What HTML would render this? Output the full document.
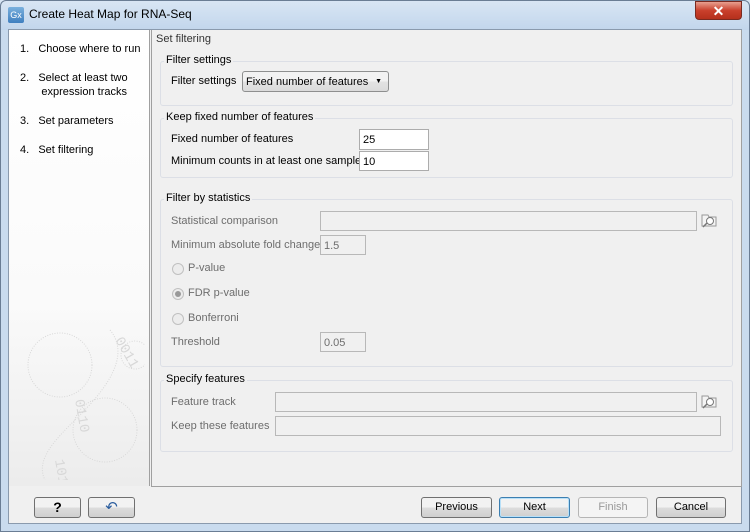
<!DOCTYPE html>
<html><head><style>
*{margin:0;padding:0;box-sizing:border-box}
body{width:750px;height:532px;overflow:hidden;font-family:"Liberation Sans",sans-serif;font-size:11px;color:#000;background:#c9dbee;position:relative}
.a{position:absolute}
.title{left:0;top:0;width:750px;height:30px;background:linear-gradient(#d9e6f4,#c2d6ec)}
.frame{left:0;top:0;width:750px;height:532px;border:1px solid #6a7d94;border-radius:6px 6px 0 0}
.client{left:8px;top:29px;width:734px;height:495px;background:#f0f0f0;border:1px solid #8a9aad}
.left{left:9px;top:30px;width:141px;height:456px;background:linear-gradient(#fff,#fafafa 60%,#ececec);border-right:1px solid #a0a0a0}
.content{left:151px;top:30px;width:591px;height:457px;border:1px solid #a0a0a0;border-top:none;background:#f0f0f0}
.grp{position:absolute;border:1px solid #dcdfe6;border-radius:3px}
.gl{position:absolute;background:#f0f0f0;padding:0 2px;font-size:11px}
.in{position:absolute;background:#fff;border:1px solid #acacac;padding:4px 3px;font-size:11px}
.dis{background:#f0f0f0;color:#6d6d6d;border-color:#b8b8b8}
.g{color:#6d6d6d}
.btn{position:absolute;top:497px;height:21px;border:1px solid #707070;border-radius:3px;background:linear-gradient(#f2f2f2 50%,#dddddd 50%,#cfcfcf);text-align:center;line-height:19px;font-size:11px}
.rad{position:absolute;width:12px;height:12px;border-radius:50%;border:1px solid #c0c0c0;background:#ececec}
</style></head><body>
<div class="a title"></div>
<div class="a" style="left:8px;top:7px;width:16px;height:16px;background:linear-gradient(#7ab0dd,#3f7fbf);border-radius:2px;color:#fff;font-size:9px;line-height:16px;text-align:center">Gx</div>
<div class="a" style="left:29px;top:7px;font-size:12px">Create Heat Map for RNA-Seq</div>
<div class="a" style="left:695px;top:1px;width:47px;height:19px;background:linear-gradient(#e8a090,#c9402c 50%,#b5301c);border:1px solid #7a2a20;border-radius:0 0 4px 4px;color:#fff;text-align:center;font-weight:bold;font-size:14px;line-height:18px">✕</div>
<div class="a frame"></div>
<div class="a client"></div>
<div class="a left"></div>
<svg class="a" style="left:15px;top:300px" width="130" height="180"><g fill="none" stroke="#d8d8d8" stroke-dasharray="1 1.5"><circle cx="45" cy="65" r="32"/><circle cx="90" cy="130" r="32"/><circle cx="120" cy="55" r="14"/><path d="M95 30 C120 60 80 100 60 120 C40 140 20 160 30 180"/></g><g fill="#d8d8d8" font-size="14" font-family="Liberation Mono"><text x="100" y="40" transform="rotate(60 100 40)">0011</text><text x="60" y="100" transform="rotate(80 60 100)">0110</text><text x="40" y="160" transform="rotate(80 40 160)">1010</text></g></svg>
<div class="a" style="left:20px;top:42px;line-height:14px">1.&nbsp;&nbsp;&nbsp;Choose where to run</div>
<div class="a" style="left:20px;top:71px;line-height:14px">2.&nbsp;&nbsp;&nbsp;Select at least two<br>&nbsp;&nbsp;&nbsp;&nbsp;&nbsp;&nbsp;&nbsp;expression tracks</div>
<div class="a" style="left:20px;top:114px;line-height:14px">3.&nbsp;&nbsp;&nbsp;Set parameters</div>
<div class="a" style="left:20px;top:143px;line-height:14px">4.&nbsp;&nbsp;&nbsp;Set filtering</div>
<div class="a content"></div>
<div class="a" style="left:156px;top:33px;color:#333">Set filtering</div>

<div class="grp" style="left:160px;top:61px;width:573px;height:45px"></div>
<div class="gl" style="left:164px;top:54px">Filter settings</div>
<div class="a" style="left:171px;top:75px">Filter settings</div>
<div class="a" style="left:242px;top:71px;width:147px;height:21px;border:1px solid #8e8f8f;border-radius:3px;background:linear-gradient(#f2f2f2 50%,#e3e3e3 50%,#dbdbdb);padding:4px 3px">Fixed number of features <span style="position:absolute;right:6px;top:6px;font-size:7px">▼</span></div>

<div class="grp" style="left:160px;top:118px;width:573px;height:60px"></div>
<div class="gl" style="left:164px;top:111px">Keep fixed number of features</div>
<div class="a" style="left:171px;top:133px">Fixed number of features</div>
<div class="in" style="left:359px;top:129px;width:70px;height:21px">25</div>
<div class="a" style="left:171px;top:155px">Minimum counts in at least one sample</div>
<div class="in" style="left:359px;top:151px;width:70px;height:20px">10</div>

<div class="grp" style="left:160px;top:199px;width:573px;height:168px"></div>
<div class="gl" style="left:164px;top:192px">Filter by statistics</div>
<div class="a g" style="left:171px;top:215px">Statistical comparison</div>
<div class="in dis" style="left:320px;top:211px;width:377px;height:20px"></div>
<svg class="a" style="left:700px;top:211px" width="18" height="18"><path d="M2 4h6l1 2h7v9H2z" fill="#f4f4f4" stroke="#999"/><circle cx="10" cy="10" r="3.5" fill="#fff" stroke="#777"/><path d="M7 12l-4 4" stroke="#777" stroke-width="1.5"/></svg>
<div class="a g" style="left:171px;top:239px">Minimum absolute fold change</div>
<div class="in dis" style="left:320px;top:235px;width:46px;height:20px">1.5</div>
<div class="rad" style="left:172px;top:263px"></div><div class="a g" style="left:188px;top:262px">P-value</div>
<div class="rad" style="left:172px;top:288px"><div style="margin:2px;width:6px;height:6px;border-radius:50%;background:#999"></div></div><div class="a g" style="left:188px;top:287px">FDR p-value</div>
<div class="rad" style="left:172px;top:313px"></div><div class="a g" style="left:188px;top:312px">Bonferroni</div>
<div class="a g" style="left:171px;top:336px">Threshold</div>
<div class="in dis" style="left:320px;top:332px;width:46px;height:20px">0.05</div>

<div class="grp" style="left:160px;top:380px;width:573px;height:72px"></div>
<div class="gl" style="left:164px;top:373px">Specify features</div>
<div class="a g" style="left:171px;top:396px">Feature track</div>
<div class="in dis" style="left:275px;top:392px;width:422px;height:20px"></div>
<svg class="a" style="left:700px;top:392px" width="18" height="18"><path d="M2 4h6l1 2h7v9H2z" fill="#f4f4f4" stroke="#999"/><circle cx="10" cy="10" r="3.5" fill="#fff" stroke="#777"/><path d="M7 12l-4 4" stroke="#777" stroke-width="1.5"/></svg>
<div class="a g" style="left:171px;top:420px">Keep these features</div>
<div class="in dis" style="left:275px;top:416px;width:446px;height:20px"></div>

<div class="btn" style="left:34px;width:47px;font-weight:bold;font-size:14px">?</div>
<div class="btn" style="left:88px;width:47px;color:#2b5d9e;font-size:15px">↶</div>
<div class="btn" style="left:421px;width:71px">Previous</div>
<div class="btn" style="left:499px;width:71px;border-color:#3c7fb1;box-shadow:inset 0 0 0 1px #b8e0f8">Next</div>
<div class="btn" style="left:578px;width:70px;color:#999;border-color:#b5b5b5;background:#f4f4f4">Finish</div>
<div class="btn" style="left:656px;width:70px">Cancel</div>
</body></html>
